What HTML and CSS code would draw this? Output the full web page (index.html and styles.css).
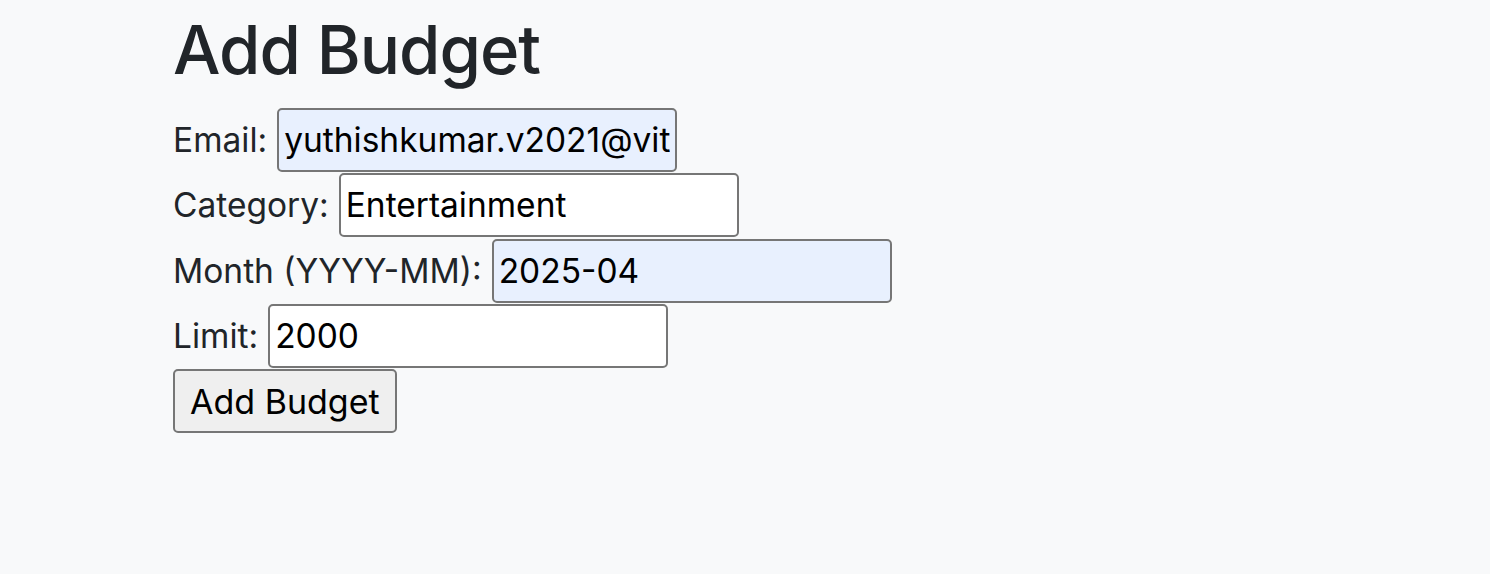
FILE: index.html
```html
<!DOCTYPE html>
<html lang="en">
<head>
<meta charset="utf-8">
<title>Add Budget</title>
<link rel="stylesheet" href="styles.css">
</head>
<body>
<main class="page">
  <h1 class="title">Add Budget</h1>
  <form class="form">
    <div class="row">
      <label class="label" for="email">Email:</label>
      <input class="field autofill" id="email" type="text" value="yuthishkumar.v2021@vitstudent.ac.in">
    </div>
    <div class="row">
      <label class="label" for="category">Category:</label>
      <input class="field" id="category" type="text" value="Entertainment">
    </div>
    <div class="row">
      <label class="label" for="month">Month (YYYY-MM):</label>
      <input class="field autofill" id="month" type="text" value="2025-04">
    </div>
    <div class="row">
      <label class="label" for="limit">Limit:</label>
      <input class="field" id="limit" type="text" value="2000">
    </div>
    <div class="row">
      <button class="btn" type="button">Add Budget</button>
    </div>
  </form>
</main>
</body>
</html>
```
FILE: styles.css
```css
html, body {
  margin: 0;
  padding: 0;
  background: #f8f9fa;
}
body {
  font-family: Inter, "Noto Sans", "Liberation Sans", sans-serif;
  color: #212529;
}
.page {
  padding: 0 0 0 173px;
}
.title {
  margin: 0;
  padding-top: 10px;
  font-size: 67px;
  font-weight: 500;
  line-height: 80px;
  letter-spacing: -1px;
  color: #212529;
}
.form {
  display: flex;
  flex-direction: column;
  gap: 1.25px;
  margin-top: 18px;
}
.row {
  display: flex;
  align-items: center;
  gap: 10px;
  height: 64px;
}
.label {
  font-size: 33.5px;
  color: #212529;
}
.field {
  box-sizing: border-box;
  width: 400px;
  height: 64px;
  margin: 0;
  padding: 0 5px;
  border: 2px solid #767676;
  border-radius: 5px;
  background: #ffffff;
  color: #000000;
  font-family: Inter, "Noto Sans", "Liberation Sans", sans-serif;
  font-size: 33.5px;
  outline: none;
}
.field.autofill {
  background: #e8f0fe;
}
.btn {
  box-sizing: border-box;
  height: 64px;
  margin: 0;
  padding: 0 15px;
  border: 2px solid #767676;
  border-radius: 5px;
  background: #efefef;
  color: #000000;
  font-family: Inter, "Noto Sans", "Liberation Sans", sans-serif;
  font-size: 34px;
}
```
